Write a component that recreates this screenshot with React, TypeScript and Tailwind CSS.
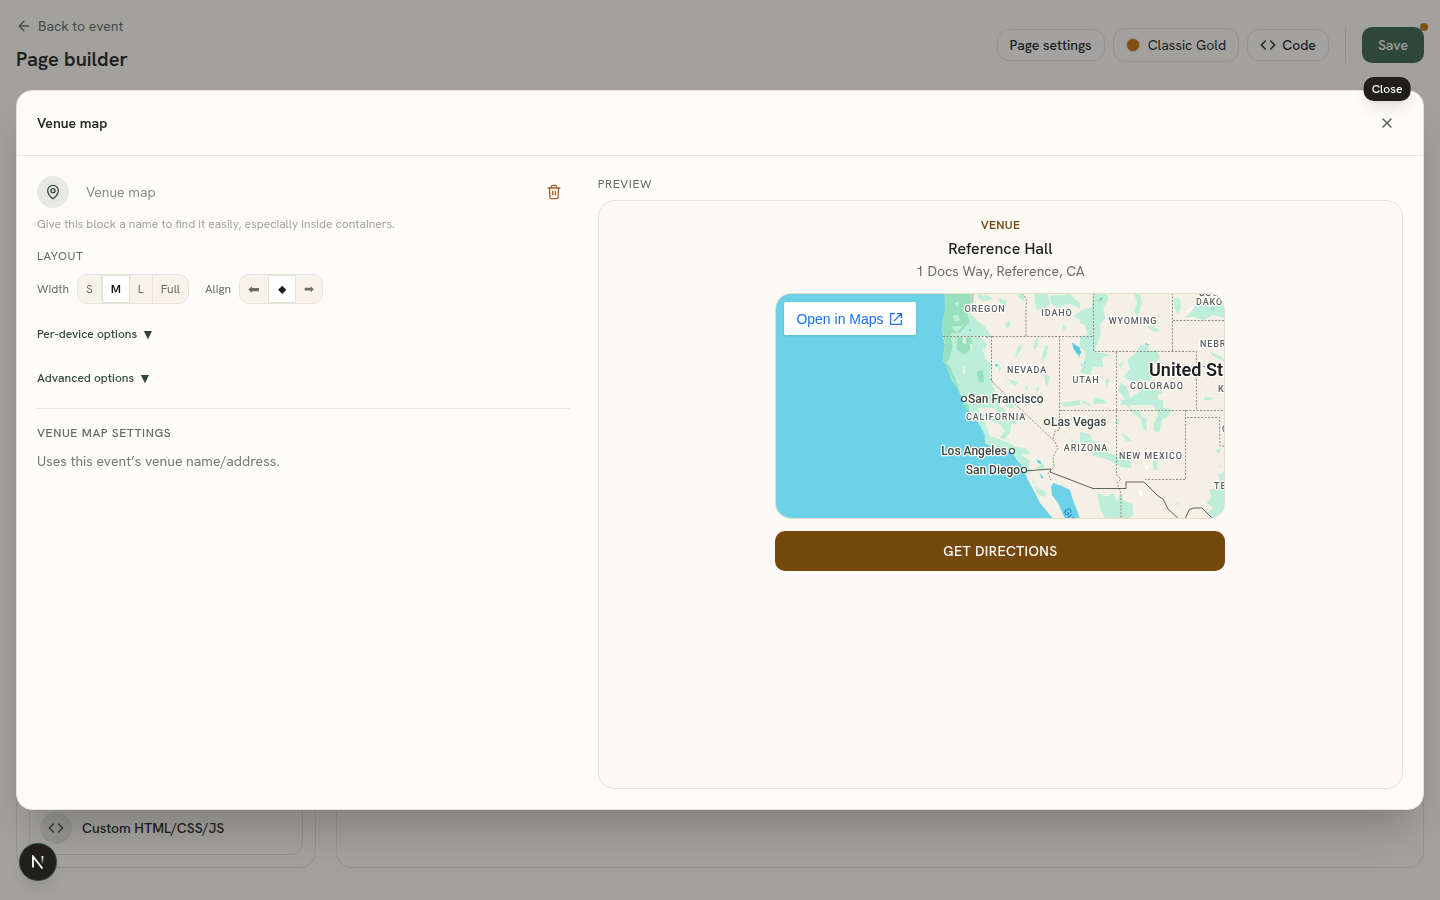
import { useState } from "react";
import { ArrowLeft, Code, MapPin, X } from "lucide-react";

const widths = ["S", "M", "L", "Full"];
const aligns = [
  { id: "left", glyph: "⬅", size: "w-7 text-sm" },
  { id: "center", glyph: "⬥", size: "w-7" },
  { id: "right", glyph: "➡", size: "w-[26px]" },
];

const stateLabels = [
  { name: "OREGON", x: 210, y: 19 },
  { name: "IDAHO", x: 282, y: 23 },
  { name: "WYOMING", x: 358, y: 31 },
  { name: "NEVADA", x: 252, y: 80 },
  { name: "UTAH", x: 311, y: 90 },
  { name: "COLORADO", x: 382, y: 96 },
  { name: "CALIFORNIA", x: 221, y: 127 },
  { name: "ARIZONA", x: 311, y: 158 },
  { name: "NEW MEXICO", x: 376, y: 166 },
];

const edgeLabels = [
  { name: "SOU", x: 424, y: 3 },
  { name: "DAKO", x: 421, y: 12 },
  { name: "NEBR", x: 425, y: 54 },
  { name: "K", x: 443, y: 99 },
  { name: "O", x: 447, y: 139 },
  { name: "TE", x: 439, y: 196 },
];

const cities = [
  { name: "San Francisco", x: 193, y: 110, cx: 189, cy: 106, anchor: "start" as const },
  { name: "Las Vegas", x: 276, y: 133, cx: 272, cy: 129, anchor: "start" as const },
  { name: "Los Angeles", x: 232, y: 162, cx: 237, cy: 158, anchor: "end" as const },
  { name: "San Diego", x: 245, y: 181, cx: 249, cy: 177, anchor: "end" as const },
];

function TrashIcon() {
  return (
    <svg width="16" height="16" viewBox="0 0 16 16" fill="none" stroke="currentColor" strokeWidth="1.3" strokeLinecap="round" strokeLinejoin="round">
      <path d="M2.2 4h11.6M5.4 3.8V2.4c0-.7.4-1.1 1.1-1.1h3c.7 0 1.1.4 1.1 1.1v1.4M3.4 4.2l.5 9c.1 1 .6 1.5 1.5 1.5h5.2c.9 0 1.4-.5 1.5-1.5l.5-9M6.7 7.2v3.6M9.3 7.2v3.6" />
    </svg>
  );
}

function VenueMap() {
  return (
    <svg className="block h-full w-full" viewBox="1 1 448 224" preserveAspectRatio="xMidYMid slice" role="img" aria-label="Map of the venue">
      <rect width="450" height="226" fill="#6cd2e8" />
      <path
        fill="#f5f0e5"
        d="M170 0V19L167 32L168 44L170 52L168 67L173 75L176 85L182 94L187 104L192 114L197 122L205 132L210 142V150L218 154L230 157L238 161L242 167L248 174L253 187L260 200L265 210L275 222L278 226H290L283 210L277 202L276 194L278 190L287 193L295 197L298 207L303 220L305 226H450V0Z"
      />

      {/* Pacific northwest and Nevada */}
      <g transform="translate(155 -8) scale(.33333)">
        <path fill="#bdeed9" d="M44 24H125L132 55L118 80L140 105L165 125L183 152L150 154L170 178L160 205L183 240L180 275L205 310L225 335L255 365L240 370L210 350L190 368H112L95 335L80 305L62 280L55 250L38 225L45 180L36 120L45 80Z" />
        <path fill="#96e0bd" d="M46 24H118L124 50L110 78L118 112L92 142L60 145L68 185L60 215L50 235L38 225L45 180L36 120L45 80Z" />
        <path fill="#96e0bd" d="M82 155L125 160L126 185L105 210L80 195ZM140 260L158 255L162 290L148 292ZM42 225L60 245L76 280L92 325L75 295L58 268Z" />
        <path fill="#bdeed9" d="M68 92L85 88L90 105L75 112ZM62 124L100 122L80 142ZM75 55L88 48L84 70Z" />
        <path fill="#c9ccc7" d="M120 24H134L128 55L120 50Z" />
        <path fill="#f5f0e5" d="M98 152L107 155L108 178L98 172ZM100 240L106 248L104 270L99 262ZM158 188L170 200L176 235L166 220ZM184 290L205 310L240 340L250 350L220 340L195 318ZM190 330L210 350L225 368H205ZM120 175L128 180L122 200Z" />
        <path fill="#bdeed9" d="M142 28L175 32L188 42L160 48L145 40ZM205 38L230 48L228 62L212 55ZM238 105L242 122L228 132L225 120ZM264 24H280L284 50L268 38ZM313 24H352L360 55L345 70L320 75L315 50ZM360 32L420 28L450 55V72L420 55L385 68L362 55ZM430 92L450 80V105ZM318 160L325 158L322 185L312 195L310 185ZM345 184L356 180L350 208L336 235L338 205ZM262 190L275 176L272 198L254 222ZM400 120L412 125L395 142ZM225 275L240 285L265 290L255 305ZM342 262L360 275L350 310L345 290ZM205 235L215 250L208 262ZM286 305L295 298L290 325ZM318 310L328 305L322 330ZM432 200L450 205V220Z" />
        <path fill="#55cde8" d="M426 172L440 182L450 188V212L440 205L430 190ZM196 236L203 238L202 246L196 244ZM168 153L176 155L173 162ZM180 280L186 284L184 292ZM116 130L124 136L120 141Z" />
      </g>

      {/* Rockies */}
      <g transform="translate(305 -8) scale(.33333)">
        <path fill="#bdeed9" d="M0 78L35 65L40 24H75L88 38L70 68L75 100L60 120L62 150L42 200L95 210L65 218L70 245L38 245L30 270L0 262L10 240L18 200L0 185V155L22 150L15 120L0 115Z" />
        <path fill="#bdeed9" d="M162 24H180L186 55L172 92L160 78L172 55ZM202 125L222 122L238 138L222 142ZM282 38L300 42L304 68L295 88L284 70ZM312 98L335 80L350 55L400 62L434 58V98L400 90L372 105L340 95ZM302 128L350 110L330 120ZM0 235L15 240L8 252ZM170 202L180 180L205 185L208 198L230 195L240 220L210 250L220 272L205 290L180 282L165 295L130 275L150 250L142 225ZM120 292L140 305L152 340L180 318L195 300L250 320L230 332L248 360H120L135 340L115 318ZM390 200L432 220V230L398 212ZM375 335L400 338L392 346L372 344ZM115 238L130 230L122 250ZM75 285L90 280L80 310ZM40 335L75 345L82 355L40 358Z" />
        <path fill="#96e0bd" d="M195 172L208 178L204 184L194 180ZM50 45L70 35L64 50Z" />
        <path fill="#ffffff" d="M318 80L336 66L332 74L320 84Z" />
        <path fill="#55cde8" d="M62 38L67 40L65 44L61 42ZM0 195L4 200L2 208L0 206ZM12 230L16 234L13 238ZM393 72L402 73L400 76Z" />
      </g>

      {/* Southern California and Baja */}
      <g transform="translate(155 107) scale(.33333)">
        <path fill="#bdeed9" d="M95 0H130L150 35L175 45L165 70L180 108L240 130L260 142L290 145L300 160L275 165L300 182L295 200L310 215L285 225L295 250L270 190L245 155L190 142L165 130L164 105L150 75L125 45Z" />
        <path fill="#bdeed9" d="M170 0H205L212 22L225 28L245 70L240 98L225 118L210 112L225 92L205 70L175 60L182 38L210 42ZM235 50L258 62L260 75L240 68ZM305 235L320 255L308 248ZM312 258L348 275L346 290L325 285ZM320 200L338 190L345 205L325 210ZM390 10L450 0V15L405 20ZM422 115L432 122L425 130Z" />
        <path fill="#96e0bd" d="M97 8L118 14L115 30L105 25Z" />
        <path fill="#55cde8" d="M318 178L332 184L334 192L325 190ZM328 218L340 232L336 238Z" />
      </g>

      {/* Arizona to Texas */}
      <g transform="translate(305 107) scale(.33333)">
        <path fill="#bdeed9" d="M120 0H155L150 25L180 35L185 52L200 58V95L185 82L184 58L160 42L140 15ZM215 0H250L248 22L278 30L262 50L245 60L238 98L222 92L220 72L235 45ZM0 95L30 102L35 120L65 132L85 160L150 180L155 204L125 202L80 178L40 168L32 148L0 145ZM122 98L142 108L154 124L138 122ZM218 185L232 180L232 212L220 208ZM102 68L118 55L115 75ZM52 278L78 290L100 278L112 305L120 280L132 302L158 312L160 345L148 354H75L60 325ZM380 308L395 292L388 270L412 265L400 248L420 240L415 225L434 215V345L395 352L382 335L400 325ZM415 200L422 188L420 205ZM408 150L424 140L416 165ZM292 305L298 310L294 320ZM0 0L15 12L35 20L20 5Z" />
        <path fill="#ffffff" d="M196 195L208 200L204 210L195 206ZM176 265L188 278L184 290L178 284Z" />
      </g>

      <g fill="none" stroke="#8f8d87" strokeWidth="1" strokeDasharray="2 1.5">
        <path d="M168 43.5H318.5M248 0L252 8L251 14V43M216.5 43V88L234 105L280 149L283 155L278 164L279 174L273 180L276 187M284.5 43V137L280 138L278 146" />
        <path d="M318.5 0V58.5H421.5V117M397.5 0V58M398 27.5H450M341.5 59V182L346 186L342 190L346 200V226M421 73.5H450M285 117.5H450M410.5 117V186.5H370M412 124.5H444.5L445 153H450" />
      </g>
      <path fill="none" stroke="#5f605c" strokeWidth="1" d="M249 178L276 176L275 179L318 195.500H351V189H369L383 203L388 206L393 216L404 226M410 226L414 217L418 215H427L438 226" />

      <g fontFamily="Roboto, sans-serif" paintOrder="stroke" strokeLinejoin="round" stroke="#ffffff" strokeWidth="2.5">
        <g fontSize="9" fontWeight="500" fill="#5b5d5a" className="tracking-widest">
          {stateLabels.map((l) => (
            <text key={l.name} x={l.x} y={l.y} textAnchor="middle">{l.name}</text>
          ))}
          {edgeLabels.map((l) => (
            <text key={l.name} x={l.x} y={l.y}>{l.name}</text>
          ))}
        </g>
        <g fontSize="12" fontWeight="500" fill="#39453c">
          {cities.map((c) => (
            <text key={c.name} x={c.x} y={c.y} textAnchor={c.anchor}>{c.name}</text>
          ))}
        </g>
        <text x="374" y="83" fontSize="18" fontWeight="600" fill="#1d1f1d">United St</text>
      </g>
      {cities.map((c) => (
        <circle key={c.name} cx={c.cx} cy={c.cy} r="2.5" fill="#fff" stroke="#3f4642" strokeWidth="1.2" />
      ))}
      <text transform="translate(288 218) rotate(55)" fontFamily="Roboto, sans-serif" fontSize="10" fill="#2277dd">Gu</text>
    </svg>
  );
}

export default function PageBuilder() {
  const [width, setWidth] = useState("M");
  const [align, setAlign] = useState("center");
  const [blockName, setBlockName] = useState("");

  return (
    <div className="relative flex min-h-screen flex-col bg-[#fdfbf7] p-4 pb-8 font-['Hanken_Grotesk','Roboto',sans-serif] text-[#1f241f]">
      <header className="flex items-center justify-between">
        <div>
          <a href="#" className="flex h-5 items-center gap-1.5 text-sm text-[#5f6f63]">
            <ArrowLeft size={16} />
            Back to event
          </a>
          <h1 className="mt-2 text-xl leading-[30px] font-semibold">Page builder</h1>
        </div>
        <div className="flex items-center gap-2 text-sm">
          <button className="h-8 rounded-xl border border-[#e3e1da] bg-white/40 px-3 font-medium">Page settings</button>
          <button className="flex h-[34px] items-center gap-2 rounded-xl border border-[#e3e1da] px-3">
            <span className="h-3.5 w-3.5 rounded-full border border-[#e3d9c6] bg-[#c27410]" />
            Classic Gold
          </button>
          <button className="flex h-8 items-center gap-1.5 rounded-xl border border-[#e3e1da] bg-white/40 px-3 font-medium">
            <Code size={16} />
            Code
          </button>
          <div className="mx-2 h-9 w-px bg-[#dedcd5]" />
          <button className="relative h-9 rounded-[10px] bg-[#3d6451] px-4 font-medium text-[#f5f5ef]">
            Save
            <span className="absolute -top-1 -right-1 h-2 w-2 rounded-full bg-[#c27410]" />
          </button>
        </div>
      </header>

      <main className="mt-4 grid flex-1 grid-cols-[300px_1fr] gap-5">
        <aside className="flex flex-col justify-end rounded-2xl border border-[#e3e1da] bg-white/40 p-3">
          <button className="flex items-center gap-2.5 rounded-xl border border-[#e3e1da] bg-[#fdfbf7] p-2.5 text-left text-sm font-medium">
            <span className="flex h-8 w-8 items-center justify-center rounded-full bg-[#e9e8e1] text-[#40524a]">
              <Code size={16} />
            </span>
            Custom HTML/CSS/JS
          </button>
        </aside>
        <section className="rounded-2xl border border-[#e3e1da]" />
      </main>

      <div className="fixed inset-0 flex items-center justify-center bg-[#1c1c18]/40 p-4">
        <div role="dialog" aria-labelledby="dialog-title" className="flex h-[80vh] w-full flex-col rounded-2xl border border-[#e3e2d8] bg-[#fdfcfa] shadow-2xl">
          <div className="flex items-center justify-between border-b border-[#e7e6dc] px-5 py-4">
            <h2 id="dialog-title" className="text-sm font-semibold">Venue map</h2>
            <div className="relative">
              <button aria-label="Close" className="flex h-8 w-8 items-center justify-center text-[#555b55]">
                <X size={16} />
              </button>
              <span role="tooltip" className="absolute bottom-full left-1/2 mb-1.5 -translate-x-1/2 rounded-[10px] bg-[#211f1b] px-2 py-1 text-xs font-medium text-white shadow-lg">
                Close
              </span>
            </div>
          </div>

          <div className="grid min-h-0 flex-1 grid-cols-[2fr_3fr] gap-6 p-5">
            <div className="overflow-y-auto pr-1">
              <div className="flex items-center gap-2">
                <span className="flex h-8 w-8 shrink-0 items-center justify-center rounded-full bg-[#e8e9e1] text-[#304a3d]">
                  <MapPin size={16} />
                </span>
                <input
                  type="text"
                  aria-label="Block name"
                  placeholder="Venue map"
                  value={blockName}
                  onChange={(e) => setBlockName(e.target.value)}
                  className="h-8 min-w-0 flex-1 border border-transparent bg-transparent px-2 text-sm placeholder:text-[#8f908a]"
                />
                <button aria-label="Delete block" className="flex h-8 w-8 items-center justify-center text-[#a0602a]">
                  <TrashIcon />
                </button>
              </div>
              <p className="mt-2 text-xs text-[#a3a39c]">Give this block a name to find it easily, especially inside containers.</p>

              <h3 className="mt-4 text-xs tracking-wider text-[#666a64]">LAYOUT</h3>
              <div className="mt-2.5 flex items-center gap-4 text-xs text-[#6a6e68]">
                <div className="flex items-center gap-2">
                  <span>Width</span>
                  <div className="flex h-[30px] overflow-hidden rounded-[10px] border border-[#e6e4da] bg-[#f7f3ea]">
                    {widths.map((w) => (
                      <button
                        key={w}
                        onClick={() => setWidth(w)}
                        className={
                          width === w
                            ? "w-7 border border-[#e3e3da] bg-white font-semibold text-[#1a1c1a]"
                            : "border-r border-[#e6e4da] px-2 last:border-r-0"
                        }
                      >
                        {w}
                      </button>
                    ))}
                  </div>
                </div>
                <div className="flex items-center gap-2">
                  <span>Align</span>
                  <div className="flex h-[30px] overflow-hidden rounded-[10px] border border-[#e6e4da] bg-[#f7f3ea]">
                    {aligns.map((a) => (
                      <button
                        key={a.id}
                        aria-label={a.id}
                        onClick={() => setAlign(a.id)}
                        className={`${a.size} ${align === a.id ? "border border-[#e3e3da] bg-white text-[#1a1c1a]" : ""}`}
                      >
                        {a.glyph}
                      </button>
                    ))}
                  </div>
                </div>
              </div>

              <div className="mt-5 flex flex-col items-start gap-6 text-xs font-medium text-[#30463a]">
                <button className="flex h-5 items-center gap-1">
                  Per-device options <span className="text-sm">▼</span>
                </button>
                <button className="flex h-5 items-center gap-1">
                  Advanced options <span className="text-sm">▼</span>
                </button>
              </div>

              <div className="mt-5 border-t border-[#e6e6da] pt-4">
                <h3 className="text-xs font-medium tracking-wider text-[#666a64]">VENUE MAP SETTINGS</h3>
                <p className="mt-2.5 text-sm text-[#777a74]">Uses this event’s venue name/address.</p>
              </div>
            </div>

            <div className="flex min-h-0 flex-col">
              <h3 className="text-xs tracking-wider text-[#666a64]">PREVIEW</h3>
              <div className="mt-2 flex flex-1 flex-col items-center overflow-y-auto rounded-2xl border border-[#e4e3dc] bg-[#fdfaf5] p-4 text-center">
                <p className="text-xs font-semibold tracking-wide text-[#78490f]">VENUE</p>
                <h4 className="mt-1 text-base font-medium">Reference Hall</h4>
                <p className="text-sm text-[#6a6d68]">1 Docs Way, Reference, CA</p>
                <div className="relative mt-3 h-[226px] w-full max-w-[450px] overflow-hidden rounded-2xl border border-[#e8dcc6]">
                  <VenueMap />
                  <a href="#" className="absolute top-2 left-2 flex h-[33px] items-center gap-1 rounded-xs bg-white px-3 font-['Liberation_Sans',sans-serif] text-sm text-[#1a73e8] shadow-sm">
                    Open in Maps
                    <svg width="16" height="16" viewBox="0 0 16 16" fill="none" stroke="currentColor" strokeWidth="1.3">
                      <path d="M7 2.600H2.600V13.400H13.400V9M9 2.600H13.400V7M13.400 2.600L6 10" />
                    </svg>
                  </a>
                </div>
                <a href="#" className="mt-3 flex h-10 w-full max-w-[450px] items-center justify-center rounded-[10px] bg-[#75490e] text-sm font-medium tracking-wide text-white">
                  GET DIRECTIONS
                </a>
              </div>
            </div>
          </div>
        </div>
      </div>

      <button aria-label="Open Next.js dev tools" className="fixed bottom-5 left-5 flex h-9 w-9 items-center justify-center rounded-full bg-[#211f1b] shadow-lg ring-1 ring-[#2c4438]">
        <svg width="14" height="14" viewBox="0 0 14 14" fill="none" strokeWidth="1.8">
          <defs>
            <linearGradient id="stem" x1="0" y1="0" x2="0" y2="1">
              <stop stopColor="#fff" />
              <stop offset="1" stopColor="#fff" stopOpacity="0" />
            </linearGradient>
          </defs>
          <path d="M2 12.500V1.500L11.500 13.500" stroke="#fff" />
          <rect x="10.500" y="1" width="1.800" height="8.500" fill="url(#stem)" />
        </svg>
      </button>
    </div>
  );
}
